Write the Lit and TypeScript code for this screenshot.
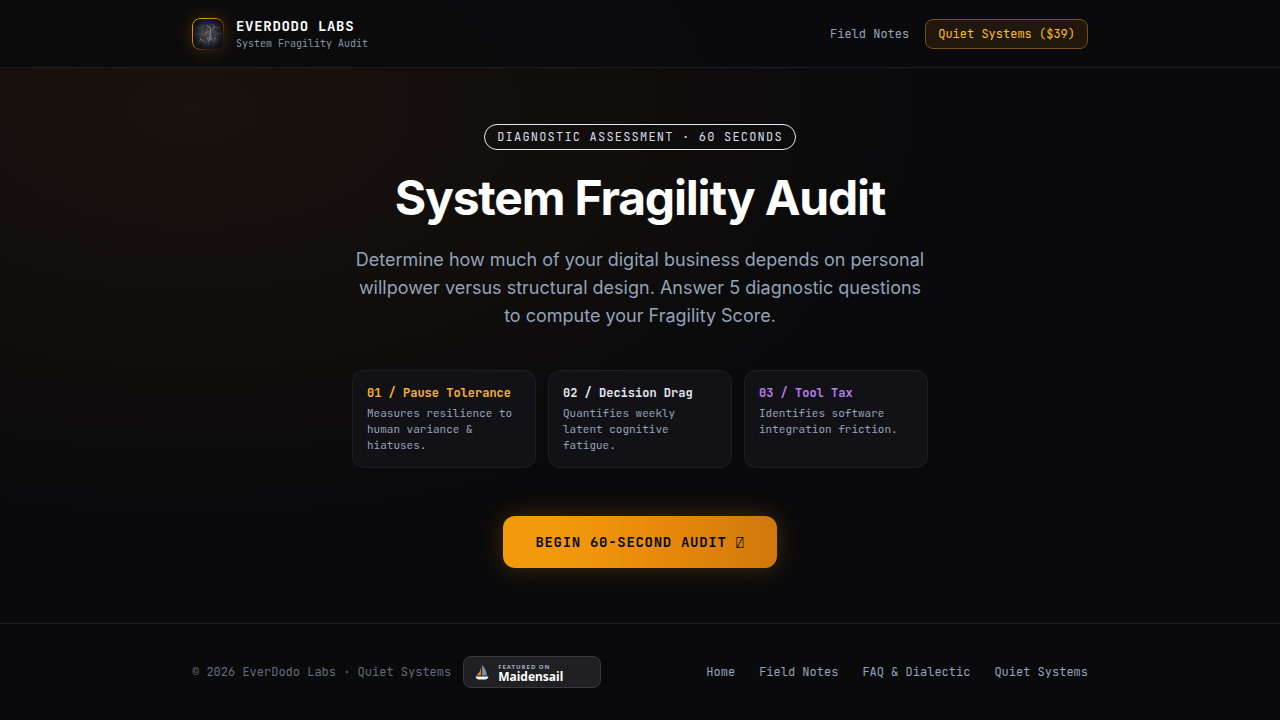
import { LitElement, html, css } from "lit";
import { customElement } from "lit/decorators.js";

interface Metric {
  title: string;
  text: string;
  tone: string;
}

const METRICS: Metric[] = [
  { title: "01 / Pause Tolerance", text: "Measures resilience to human variance & hiatuses.", tone: "amber" },
  { title: "02 / Decision Drag", text: "Quantifies weekly latent cognitive fatigue.", tone: "light" },
  { title: "03 / Tool Tax", text: "Identifies software integration friction.", tone: "violet" },
];

const FOOTER_LINKS = ["Home", "Field Notes", "FAQ & Dialectic", "Quiet Systems"];

@customElement("app-root")
export class AppRoot extends LitElement {
  static styles = css`
    :host {
      display: flex;
      flex-direction: column;
      min-height: 100vh;
      background:
        radial-gradient(ellipse at 15% 15%, rgba(217, 119, 20, 0.07), transparent 48%),
        #0a0a0c;
      color: #f1f5f9;
      font-family: "JetBrains Mono", "Liberation Mono", monospace;
      font-size: 12px;
      line-height: 16px;
    }
    * {
      box-sizing: border-box;
    }
    h1,
    h2,
    p {
      margin: 0;
    }
    a {
      color: inherit;
      text-decoration: none;
    }
    .header {
      background: rgba(10, 10, 12, 0.8);
      border-bottom: 1px solid #1e1e24;
      padding: 16px 24px;
    }
    .footer {
      border-top: 1px solid #1e1e22;
      padding: 32px 24px;
    }
    .bar {
      display: flex;
      align-items: center;
      justify-content: space-between;
      gap: 16px;
      max-width: 896px;
      margin: 0 auto;
    }
    .brand {
      display: flex;
      align-items: center;
      gap: 12px;
    }
    .logo {
      display: block;
      width: 32px;
      height: 32px;
      border-radius: 8px;
      box-shadow: 0 0 16px rgba(245, 145, 11, 0.22);
    }
    .name {
      display: block;
      font-size: 14px;
      line-height: 20px;
      font-weight: 700;
      letter-spacing: 0.05em;
      color: #fff;
    }
    .tagline {
      display: block;
      font-size: 10px;
      line-height: 15px;
      color: #8894a8;
    }
    .nav {
      display: flex;
      align-items: center;
      gap: 16px;
      color: #94a3b8;
    }
    .buy {
      padding: 6px 12px;
      border: 1px solid #774f13;
      border-radius: 8px;
      background: #22170c;
      color: #fbbf24;
    }
    .main {
      flex: 1;
      display: flex;
      flex-direction: column;
      align-items: center;
      justify-content: center;
      padding: 48px 24px;
      text-align: center;
    }
    .tag {
      padding: 4px 12px;
      border: 1px solid #e2e8f0;
      border-radius: 999px;
      letter-spacing: 0.1em;
      color: #d5dde8;
    }
    .title {
      margin-top: 24px;
      font-family: Inter, sans-serif;
      font-size: 48px;
      line-height: 48px;
      font-weight: 700;
      letter-spacing: -0.025em;
      color: #fff;
    }
    .lead {
      max-width: 576px;
      margin-top: 24px;
      font-family: Inter, sans-serif;
      font-size: 18px;
      line-height: 28px;
      color: #94a3b8;
    }
    .cards {
      display: grid;
      grid-template-columns: repeat(3, 1fr);
      gap: 12px;
      width: 100%;
      max-width: 576px;
      margin-top: 40px;
      text-align: left;
    }
    .card {
      padding: 14px;
      border: 1px solid #1e1e26;
      border-radius: 12px;
      background: #121216;
    }
    .card-title {
      font-size: 12px;
      line-height: 16px;
      font-weight: 700;
    }
    .amber {
      color: #fbb324;
    }
    .light {
      color: #e2e8f0;
    }
    .violet {
      color: #b57ff0;
    }
    .card-text {
      margin-top: 4px;
      font-size: 11px;
      line-height: 16px;
      color: #94a3b8;
    }
    .start {
      margin-top: 48px;
      padding: 16px 32px;
      border: 0;
      border-radius: 12px;
      background: linear-gradient(to right, #f39a0b, #f0960b 30%, #e4860a 65%, #d0780e);
      box-shadow: 0 0 24px rgba(245, 158, 11, 0.22);
      color: #0a0a0c;
      font-family: inherit;
      font-size: 14px;
      line-height: 20px;
      font-weight: 700;
      letter-spacing: 0.05em;
      cursor: pointer;
    }
    .glyph {
      display: inline-block;
      width: 9px;
      font-size: 12px;
      line-height: 12px;
      font-weight: 400;
    }
    .credits {
      display: flex;
      align-items: center;
      gap: 12px;
      color: #646c7c;
    }
    .featured {
      display: flex;
      align-items: center;
      gap: 8px;
      width: 138px;
      height: 32px;
      padding: 2px 10px 0;
      border: 1px solid #38383e;
      border-radius: 8px;
      background: #202024;
      font-family: "Noto Sans", sans-serif;
      font-weight: 700;
    }
    .boat {
      display: block;
      width: 16px;
      height: 16px;
    }
    .over {
      display: block;
      font-size: 6px;
      line-height: 8px;
      letter-spacing: 1px;
      color: #a3b1c6;
    }
    .site {
      display: block;
      font-size: 12px;
      line-height: 12px;
      color: #fff;
    }
    .links {
      display: flex;
      gap: 24px;
      color: #94a3b8;
    }
  `;

  private logo() {
    return html`<svg class="logo" viewBox="0 0 32 32" aria-hidden="true">
      <defs>
        <linearGradient id="rim" x1="0" y1="0" x2="1" y2="1">
          <stop offset="0" stop-color="#f59e0b" />
          <stop offset=".45" stop-color="#d97706" />
          <stop offset=".7" stop-color="#3a2414" />
          <stop offset="1" stop-color="#16171d" />
        </linearGradient>
        <radialGradient id="core">
          <stop offset="0" stop-color="#4a4c55" />
          <stop offset=".6" stop-color="#2a2c33" />
          <stop offset="1" stop-color="#111218" />
        </radialGradient>
      </defs>
      <rect x=".5" y=".5" width="31" height="31" rx="7.5" fill="url(#core)" stroke="url(#rim)" />
      <g fill="none" stroke="#62656f" stroke-width="1" opacity=".45">
        <path d="M5 9l4 2 3-4 4 2 5-3 2 4 5-1M4 17l4-2 3 3 3-5 4 3 4-4 3 4 4-1M7 23l4-2 3 4 4-5 4 4 4-3" />
        <path d="M9 6l2 8-3 6 5 5M22 6l-2 7 4 4-3 8M16 9l-3 7 5 5-2 6" />
      </g>
      <path d="M13 17l2-3 2-1M17 9l-2-2M8 21l3 2M23 8l-2 3M22 21l2-1" fill="none" stroke="#a5691f" stroke-width="1" />
      <path d="M17 9l2 2-1 5 1 4" fill="none" stroke="#868a95" stroke-width="1" />
      <path d="M14 20l4-2 3 3-4 3z" fill="#757984" opacity=".6" />
    </svg>`;
  }

  private boat() {
    return html`<svg class="boat" viewBox="0 0 16 16" aria-hidden="true">
      <path d="M7 2v8.500H2.500C5 8 6.500 5.500 7 2z" fill="#e08a0c" />
      <path d="M8 0c3 3 4.500 6 5 10.500H8z" fill="#7e8da3" />
      <path d="M1.500 11.500h13c-.5 2-1.700 3-3.500 3H5c-1.800 0-3-1-3.500-3z" fill="#f1f5f9" />
    </svg>`;
  }

  render() {
    return html`
      <header class="header">
        <div class="bar">
          <a class="brand" href="#">
            ${this.logo()}
            <span>
              <span class="name">EVERDODO LABS</span>
              <span class="tagline">System Fragility Audit</span>
            </span>
          </a>
          <nav class="nav">
            <a href="#notes">Field Notes</a>
            <a class="buy" href="#quiet">Quiet Systems ($39)</a>
          </nav>
        </div>
      </header>
      <main class="main">
        <div class="tag">DIAGNOSTIC ASSESSMENT · 60 SECONDS</div>
        <h1 class="title">System Fragility Audit</h1>
        <p class="lead">
          Determine how much of your digital business depends on personal willpower versus structural design. Answer 5
          diagnostic questions to compute your Fragility Score.
        </p>
        <section class="cards">
          ${METRICS.map(
            (m) => html`<article class="card">
              <h2 class="card-title ${m.tone}">${m.title}</h2>
              <p class="card-text">${m.text}</p>
            </article>`
          )}
        </section>
        <button class="start" type="button">BEGIN 60-SECOND AUDIT <span class="glyph">⍁</span></button>
      </main>
      <footer class="footer">
        <div class="bar">
          <div class="credits">
            <span>© 2026 EverDodo Labs · Quiet Systems</span>
            <a class="featured" href="#maidensail">
              ${this.boat()}
              <span>
                <span class="over">FEATURED ON</span>
                <span class="site">Maidensail</span>
              </span>
            </a>
          </div>
          <nav class="links">${FOOTER_LINKS.map((l) => html`<a href="#">${l}</a>`)}</nav>
        </div>
      </footer>
    `;
  }
}
